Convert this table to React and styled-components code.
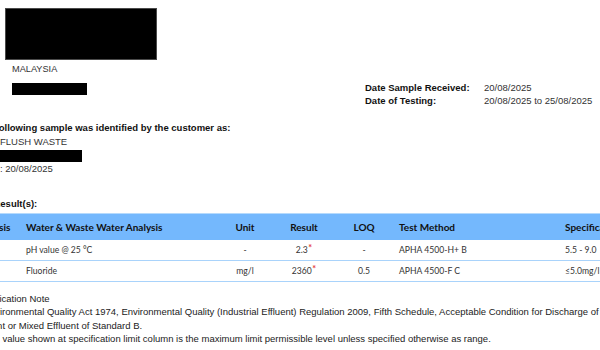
import React from 'react';
import styled, { createGlobalStyle } from 'styled-components';

const GlobalStyle = createGlobalStyle`
  html, body {
    margin: 0;
    padding: 0;
    background: #fff;
  }
  #root {
    width: 600px;
    height: 350px;
    overflow: hidden;
  }
`;

const Page = styled.div`
  width: 600px;
  height: 350px;
  overflow: hidden;
  background: #fff;
  font-family: "Liberation Sans", Arial, sans-serif;
  color: #2a2a2a;
`;

// the report page is wider than the shot, its left edge sits off screen
const Sheet = styled.div`
  width: 780px;
  margin-left: -24px;
  padding-top: 8px;
  display: flex;
  flex-direction: column;
`;

const Header = styled.header`
  display: flex;
  align-items: flex-start;
`;

const Client = styled.div`
  box-sizing: border-box;
  width: 389px;
  padding-left: 29px;
  display: flex;
  flex-direction: column;
  align-items: flex-start;
`;

const Redacted = styled.div`
  box-sizing: border-box;
  width: ${p => p.$w}px;
  height: ${p => p.$h}px;
  margin-left: ${p => p.$indent || 0}px;
  margin-top: ${p => p.$top || 0}px;
  background: #000;
  border: 1px solid ${p => (p.$edge ? '#4a4a4a' : '#000')};
`;

const Country = styled.div`
  margin: 4px 0 0 7px;
  font-size: 9.2px;
  line-height: 11px;
  color: #333;
`;

const Dates = styled.dl`
  margin: 73px 0 0;
  display: grid;
  grid-template-columns: 119px auto;
  font-size: 9.5px;
  line-height: 13px;
  color: #111;
`;

const DateLabel = styled.dt`
  font-weight: bold;
`;

const DateValue = styled.dd`
  margin: 0;
  color: #333;
`;

const Sample = styled.section`
  margin-top: 14px;
  display: flex;
  flex-direction: column;
  align-items: flex-start;
  font-size: 9.5px;
  line-height: 13px;
`;

const Heading = styled.div`
  font-weight: bold;
  color: #111;
  margin-top: ${p => p.$top || 0}px;
  margin-left: ${p => p.$shift || 0}px;
`;

const Detail = styled.div`
  padding-left: 24px;
  margin-top: ${p => p.$top || 0}px;
  color: #333;
`;

const Table = styled.table`
  margin-top: 3px;
  width: 735px;
  table-layout: fixed;
  border-collapse: collapse;
  font-family: Lato, "Liberation Sans", sans-serif;
  border-top: 1px solid #b6dafc;
`;

const Th = styled.th`
  height: 26px;
  padding: 0 4px;
  background: #74b8fd;
  font-size: 10px;
  font-weight: bold;
  color: #111;
  text-align: ${p => p.$align || 'center'};
  white-space: nowrap;
  overflow: hidden;
`;

const Td = styled.td`
  height: 20px;
  padding: 0 4px;
  font-size: 8.6px;
  color: #333;
  text-align: ${p => p.$align || 'center'};
  border-bottom: 1px solid #a9d3fb;
  white-space: nowrap;
  overflow: hidden;
`;

const Mark = styled.sup`
  color: #e5403a;
  font-size: 9px;
  font-weight: bold;
  line-height: 0;
  margin-left: 0.5px;
  vertical-align: 2px;
`;

const Notes = styled.section`
  margin: 10px 0 0 -3px;
  font-size: 9.5px;
  line-height: 13.3px;
  color: #222;
`;

const NoteLine = styled.div`
  white-space: nowrap;
`;

const columns = [46, 193, 60, 58, 62, 166, 150];

const rows = [
  { name: 'pH value @ 25 °C', unit: '-', result: '2.3', loq: '-', method: 'APHA 4500-H+ B', spec: '5.5 - 9.0' },
  { name: 'Fluoride', unit: 'mg/l', result: '2360', loq: '0.5', method: 'APHA 4500-F C', spec: '≤5.0mg/l' },
];

export default function App() {
  return (
    <Page>
      <GlobalStyle />
      <Sheet>
        <Header>
          <Client>
            <Redacted $w={152} $h={52} $edge />
            <Country>MALAYSIA</Country>
            <Redacted $w={75} $h={12} $indent={7} $top={8} />
          </Client>
          <Dates>
            <DateLabel>Date Sample Received:</DateLabel>
            <DateValue>20/08/2025</DateValue>
            <DateLabel>Date of Testing:</DateLabel>
            <DateValue>20/08/2025 to 25/08/2025</DateValue>
          </Dates>
        </Header>

        <Sample>
          <Heading>The following sample was identified by the customer as:</Heading>
          <Detail $top={1}>FLUSH WASTE</Detail>
          <Redacted $w={82} $h={12} $indent={24} $top={2} />
          <Detail>: 20/08/2025</Detail>
          <Heading $top={22} $shift={-4}>Test Result(s):</Heading>
        </Sample>

        <Table>
          <colgroup>
            {columns.map((w, i) => <col key={i} style={{ width: w }} />)}
          </colgroup>
          <thead>
            <tr>
              <Th>Basis</Th>
              <Th $align="left">Water &amp; Waste Water Analysis</Th>
              <Th>Unit</Th>
              <Th>Result</Th>
              <Th>LOQ</Th>
              <Th $align="left">Test Method</Th>
              <Th $align="left">Specification Limit</Th>
            </tr>
          </thead>
          <tbody>
            {rows.map(r => (
              <tr key={r.name}>
                <Td />
                <Td $align="left">{r.name}</Td>
                <Td>{r.unit}</Td>
                <Td>{r.result}<Mark>*</Mark></Td>
                <Td>{r.loq}</Td>
                <Td $align="left">{r.method}</Td>
                <Td $align="left">{r.spec}</Td>
              </tr>
            ))}
          </tbody>
        </Table>

        <Notes>
          <NoteLine>Specification Note</NoteLine>
          <NoteLine>1. Environmental Quality Act 1974, Environmental Quality (Industrial Effluent) Regulation 2009, Fifth Schedule, Acceptable Condition for Discharge of Industrial</NoteLine>
          <NoteLine>Effluent or Mixed Effluent of Standard B.</NoteLine>
          <NoteLine>2. The value shown at specification limit column is the maximum limit permissible level unless specified otherwise as range.</NoteLine>
        </Notes>
      </Sheet>
    </Page>
  );
}
